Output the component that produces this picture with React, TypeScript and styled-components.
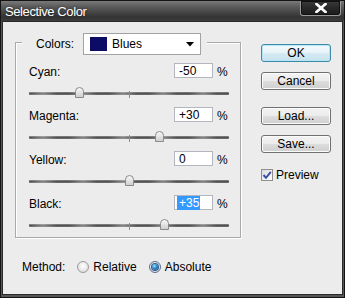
import React from "react";
import styled, { createGlobalStyle } from "styled-components";

const Global = createGlobalStyle`
  html, body { margin: 0; padding: 0; background: #ececec; }
  body { font-family: "Liberation Sans", Arial, sans-serif; font-size: 12px; color: #000; }
  * { box-sizing: border-box; }
`;

const Window = styled.div`
  width: 345px;
  height: 298px;
  display: flex;
  flex-direction: column;
  border: 1px solid #141414;
  background: #555;
`;

const TitleBar = styled.div`
  height: 20px;
  flex: none;
  display: flex;
  align-items: flex-start;
  background: linear-gradient(180deg, #7a7a7a 0%, #5e5e5e 25%, #474747 55%, #333 80%, #3c3c3c 100%);
`;

const Title = styled.div`
  padding: 3px 0 0 4px;
  color: #fff;
  font-size: 13px;
  letter-spacing: -0.4px;
  line-height: 16px;
  text-shadow: 0 0 3px rgba(0, 0, 0, 0.6);
`;

const CloseButton = styled.div`
  margin-left: auto;
  margin-right: 3px;
  width: 41px;
  height: 15px;
  display: flex;
  align-items: center;
  justify-content: center;
  border: 1px solid #9a9a9a;
  border-top: none;
  border-radius: 0 0 3px 3px;
  background: linear-gradient(180deg, #3a3a3a 0%, #262626 55%, #1c1c1c 100%);
  box-shadow: inset 0 0 0 1px #111;
`;

const Frame = styled.div`
  flex: 1;
  display: flex;
  padding: 0 1px 2px;
`;

const Content = styled.div`
  flex: 1;
  display: flex;
  background: #ececec;
  border: 1px solid #2a2a2a;
  padding: 20px 10px 0 12px;
`;

const LeftCol = styled.div`
  width: 226px;
  display: flex;
  flex-direction: column;
`;

const GroupBox = styled.div`
  border: 1px solid #a9a9a9;
  box-shadow: 1px 1px 0 #fff, inset 1px 1px 0 #fff;
  display: flex;
  flex-direction: column;
  padding: 0 12px 6px 12px;
`;

const Legend = styled.div`
  align-self: flex-start;
  margin: -10px 0 0 -6px;
  padding: 0 6px 0 14px;
  background: #ececec;
  display: flex;
  align-items: center;
  gap: 9px;
  height: 22px;
`;

const Dropdown = styled.div`
  width: 118px;
  height: 22px;
  background: #fff;
  border: 1px solid #a2a2a2;
  display: flex;
  align-items: center;
  padding: 0 6px 0 6px;
  gap: 5px;
`;

const Swatch = styled.div`
  width: 17px;
  height: 14px;
  background: #0c0c66;
`;

const DropText = styled.span`
  flex: 1;
`;

const Rows = styled.div`
  display: flex;
  flex-direction: column;
  gap: 8px;
  margin-top: 8px;
  padding-left: 1px;
`;

const Row = styled.div`
  display: flex;
  flex-direction: column;
`;

const TopLine = styled.div`
  display: flex;
  align-items: center;
  height: 15px;
`;

const Label = styled.span`
  flex: 1;
  padding-top: 3px;
`;

const NumBox = styled.div`
  width: 39px;
  height: 15px;
  background: #fff;
  border: 1px solid #b3b6bd;
  padding-left: 4px;
  line-height: 14px;
  display: flex;
  align-items: center;
`;

const Selected = styled.span`
  background: #3399ff;
  color: #fff;
  padding: 0 1px 0 2px;
  margin-left: -2px;
`;

const Percent = styled.span`
  margin-left: 4px;
  width: 11px;
  padding-top: 2px;
`;

const SliderWrap = styled.div`
  position: relative;
  margin-top: 9px;
  height: 12px;
  margin-right: -1px;
`;

const Track = styled.div`
  position: absolute;
  left: 0;
  right: 0;
  top: 5px;
  height: 3px;
  border-radius: 1px;
  background:
    repeating-linear-gradient(90deg, rgba(255,255,255,0) 0px, rgba(255,255,255,0.3) 14px, rgba(255,255,255,0) 28px, rgba(255,255,255,0) 40px),
    linear-gradient(180deg, #8c8c8c 0%, #505050 50%, #747474 100%);
`;

const Tick = styled.div`
  position: absolute;
  left: 50%;
  top: 4px;
  width: 1px;
  height: 7px;
  background: #8c8c8c;
`;

const Thumb = styled.svg`
  position: absolute;
  top: 0;
  width: 9px;
  height: 11px;
  margin-left: -4px;
`;

const MethodRow = styled.div`
  margin-top: 21px;
  height: 16px;
  display: flex;
  align-items: center;
  padding-left: 7px;
`;

const MethodLabel = styled.span`
  margin-right: 12px;
`;

const RadioItem = styled.label`
  display: flex;
  align-items: center;
  gap: 4px;
  margin-right: 12px;
`;

const RadioCircle = styled.span<{ $on?: boolean }>`
  width: 12px;
  height: 12px;
  border-radius: 50%;
  border: 1px solid ${(p) => (p.$on ? "#5a6f8a" : "#9a9a9a")};
  background: radial-gradient(circle at 50% 40%, #ffffff 0%, #e6e6e6 60%, #d0d0d0 100%);
  display: flex;
  align-items: center;
  justify-content: center;
  &::after {
    content: "";
    display: ${(p) => (p.$on ? "block" : "none")};
    width: 6px;
    height: 6px;
    border-radius: 50%;
    background: radial-gradient(circle at 40% 35%, #9fe0ff 0%, #2a8ad0 45%, #0c3f78 100%);
    box-shadow: 0 0 0 1px #2f5d8c;
  }
`;

const RightCol = styled.div`
  margin-left: 20px;
  width: 70px;
  padding-top: 2px;
  display: flex;
  flex-direction: column;
`;

const Button = styled.div<{ $primary?: boolean; $gap?: number }>`
  height: 18px;
  margin-top: ${(p) => p.$gap ?? 0}px;
  display: flex;
  align-items: center;
  justify-content: center;
  border-radius: 3px;
  border: 1px solid ${(p) => (p.$primary ? "#3c8ca8" : "#707070")};
  background: ${(p) =>
    p.$primary
      ? "linear-gradient(180deg, #f4fafd 0%, #e8f3f8 50%, #d6ebf3 51%, #c6e2ee 100%)"
      : "linear-gradient(180deg, #f3f3f3 0%, #ebebeb 50%, #dddddd 51%, #cfcfcf 100%)"};
  box-shadow: inset 0 0 0 1px ${(p) => (p.$primary ? "#b8e6f6" : "#fcfcfc")};
  line-height: 14px;
`;

const CheckRow = styled.label`
  margin-top: 15px;
  display: flex;
  align-items: center;
  gap: 3px;
`;

const CheckBox = styled.span`
  width: 12px;
  height: 12px;
  border: 1px solid #8e8f8f;
  background: linear-gradient(135deg, #dcdcdc, #fff);
  display: flex;
  align-items: center;
  justify-content: center;
`;

type SliderProps = { label: string; value: number; selected?: boolean };

const SliderRow = ({ label, value, selected }: SliderProps) => {
  const text = value > 0 ? `+${value}` : `${value}`;
  const pos = ((value + 100) / 200) * 100;
  return (
    <Row>
      <TopLine>
        <Label>{label}</Label>
        <NumBox>{selected ? <Selected>{text}</Selected> : text}</NumBox>
        <Percent>%</Percent>
      </TopLine>
      <SliderWrap>
        <Track />
        <Tick />
        <Thumb viewBox="0 0 9 11" style={{ left: `${pos}%` }}>
          <defs>
            <linearGradient id={`tg-${label}`} x1="0" y1="0" x2="0" y2="1">
              <stop offset="0" stopColor="#fafafa" />
              <stop offset="1" stopColor="#cdcdcd" />
            </linearGradient>
          </defs>
          <path
            d="M0.5 10.5 V4.5 Q0.5 0.5 4.5 0.5 Q8.5 0.5 8.5 4.5 V10.5 Z"
            fill={`url(#tg-${label})`}
            stroke="#8a8a8a"
            strokeWidth="1"
          />
        </Thumb>
      </SliderWrap>
    </Row>
  );
};

export default function App() {
  return (
    <>
      <Global />
      <Window>
        <TitleBar>
          <Title>Selective Color</Title>
          <CloseButton>
            <svg width="12" height="10" viewBox="0 0 12 10">
              <path d="M1.5 1 L10.5 9 M10.5 1 L1.5 9" stroke="#fff" strokeWidth="2.6" strokeLinecap="square" />
            </svg>
          </CloseButton>
        </TitleBar>
        <Frame>
          <Content>
            <LeftCol>
              <GroupBox>
                <Legend>
                  <span>Colors:</span>
                  <Dropdown>
                    <Swatch />
                    <DropText>Blues</DropText>
                    <svg width="8" height="5" viewBox="0 0 8 5">
                      <path d="M0 0 H8 L4 4.5 Z" fill="#000" />
                    </svg>
                  </Dropdown>
                </Legend>
                <Rows>
                  <SliderRow label="Cyan:" value={-50} />
                  <SliderRow label="Magenta:" value={30} />
                  <SliderRow label="Yellow:" value={0} />
                  <SliderRow label="Black:" value={35} selected />
                </Rows>
              </GroupBox>
              <MethodRow>
                <MethodLabel>Method:</MethodLabel>
                <RadioItem>
                  <RadioCircle />
                  <span>Relative</span>
                </RadioItem>
                <RadioItem>
                  <RadioCircle $on />
                  <span>Absolute</span>
                </RadioItem>
              </MethodRow>
            </LeftCol>
            <RightCol>
              <Button $primary>OK</Button>
              <Button $gap={10}>Cancel</Button>
              <Button $gap={17}>Load...</Button>
              <Button $gap={10}>Save...</Button>
              <CheckRow>
                <CheckBox>
                  <svg width="10" height="10" viewBox="0 0 10 10">
                    <path d="M1.5 5 L4 7.8 L8.8 1.8" stroke="#3a4fa8" strokeWidth="2" fill="none" />
                  </svg>
                </CheckBox>
                <span>Preview</span>
              </CheckRow>
            </RightCol>
          </Content>
        </Frame>
      </Window>
    </>
  );
}
